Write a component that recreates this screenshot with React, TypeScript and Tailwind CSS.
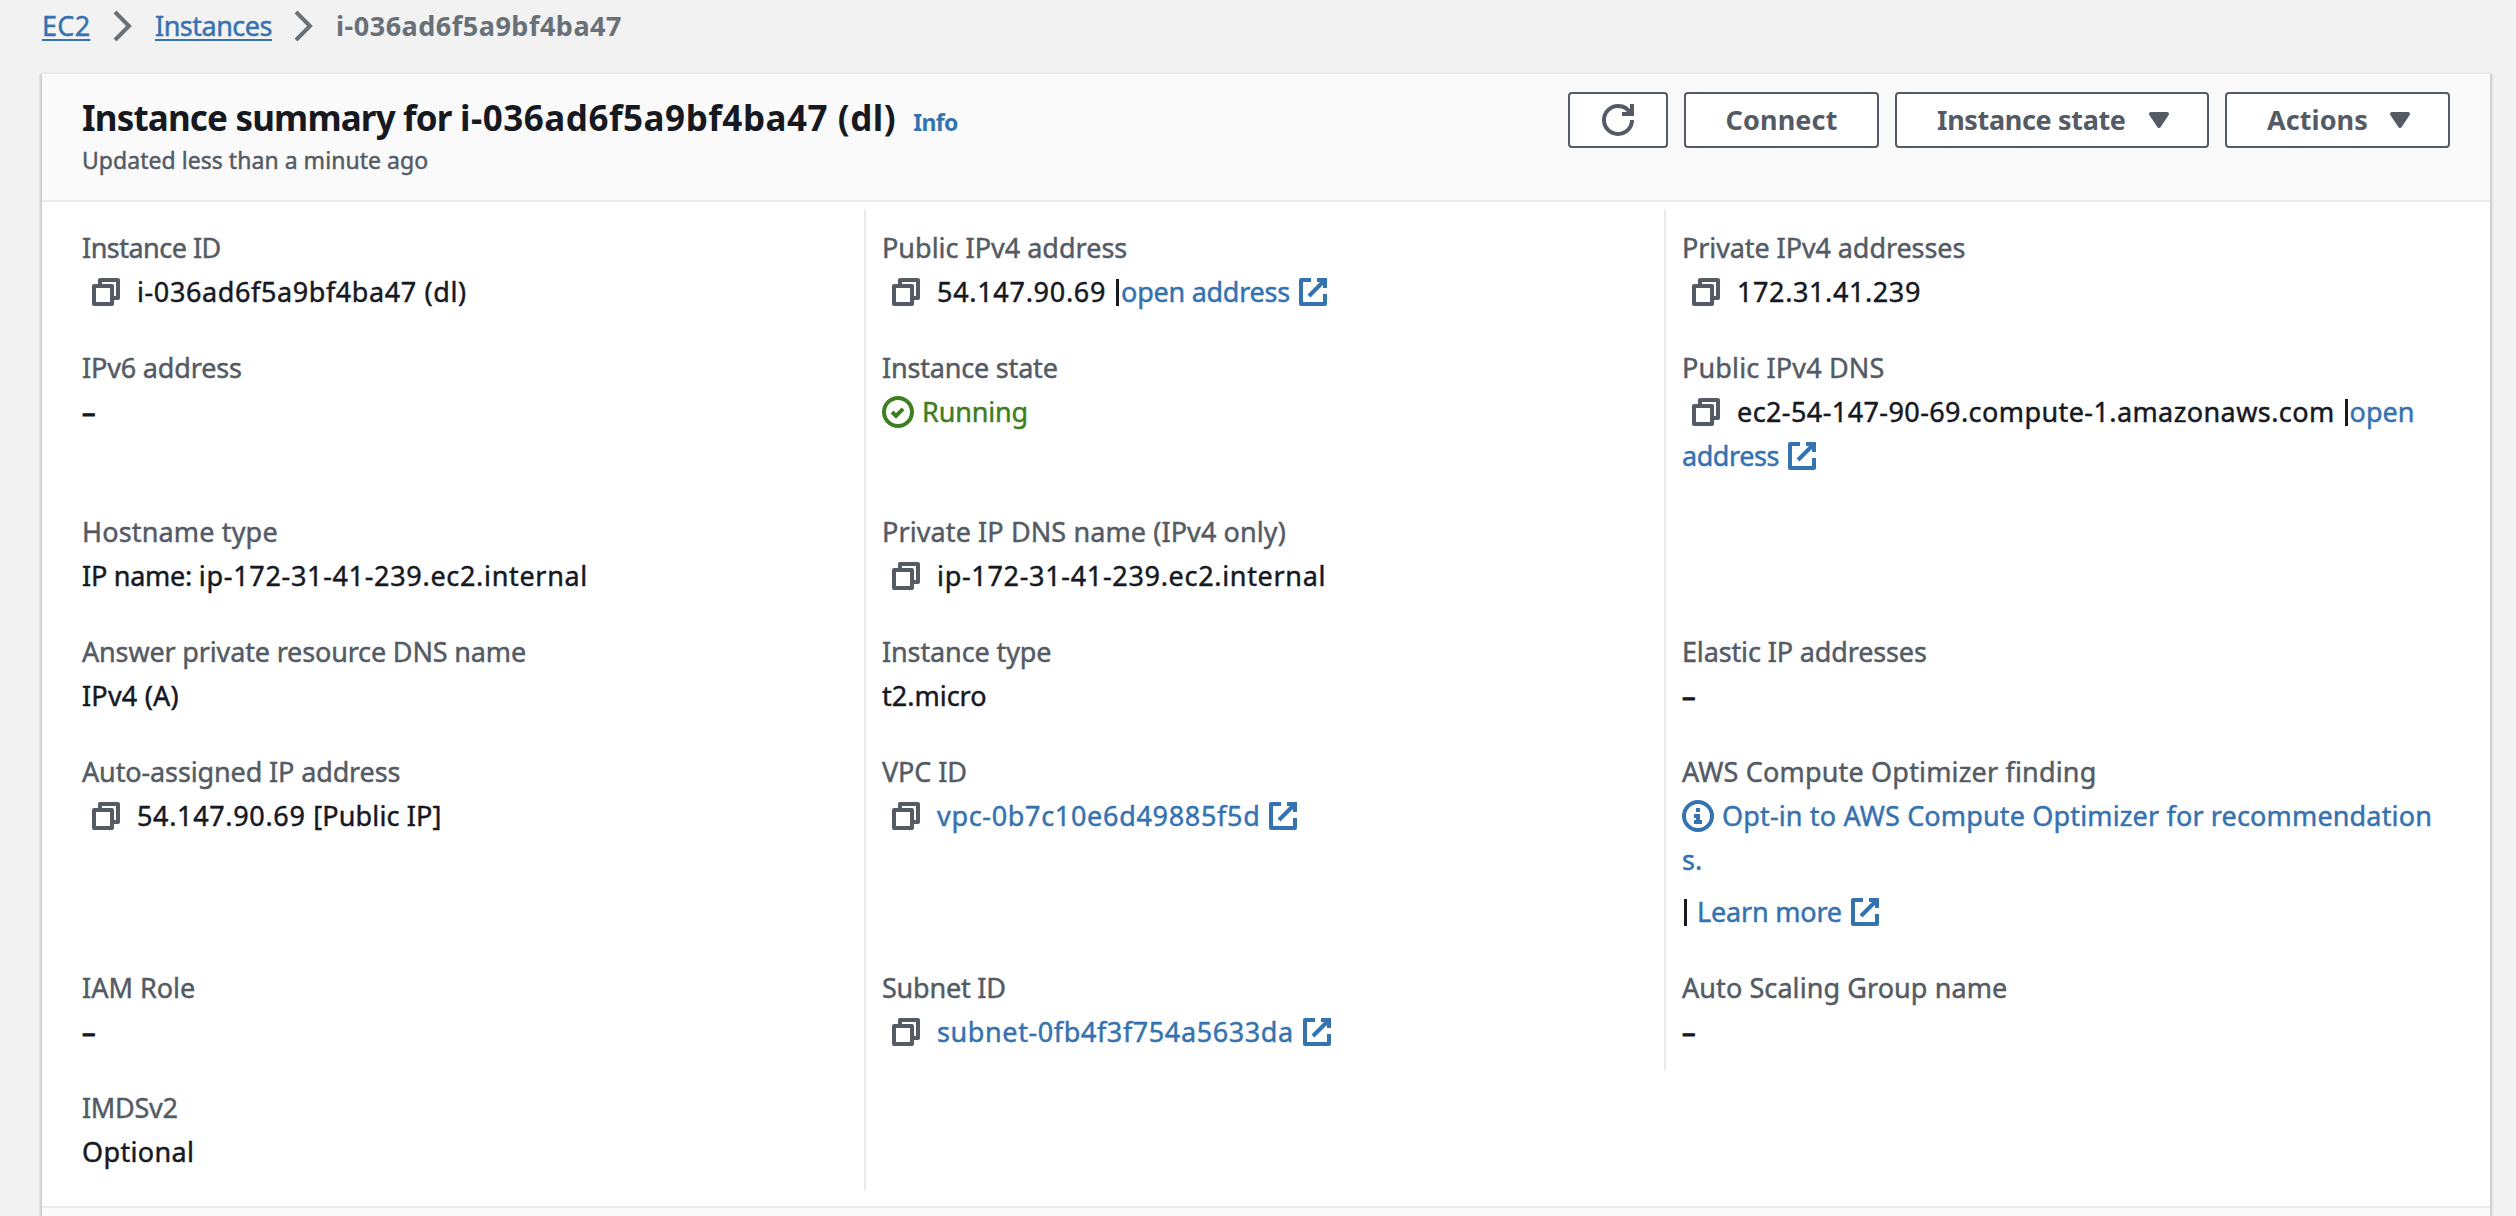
import type { ReactNode } from "react";

const iconBase = {
  viewBox: "0 0 16 16",
  fill: "none",
  stroke: "currentColor",
  strokeWidth: 2,
} as const;

function CopyIcon() {
  return (
    <svg {...iconBase} strokeLinejoin="round" className="mr-[15px] ml-2 size-8 shrink-0 text-[#545b64]">
      <path d="M2 5h9v9H2z" />
      <path d="M5 5V2h9v9h-3" />
    </svg>
  );
}

function ExternalIcon({ className }: { className: string }) {
  return (
    <svg {...iconBase} className={`size-8 shrink-0 ${className}`}>
      <path d="M10 2h4v4" />
      <path d="m6 10 8-8" />
      <path strokeLinejoin="round" d="M14 9.048V14H2V2h5" />
    </svg>
  );
}

function CheckCircle() {
  return (
    <svg {...iconBase} className="mr-2 size-8 shrink-0">
      <circle cx="8" cy="8" r="7" />
      <path d="m5 8 2 2 3.521-3.521" />
    </svg>
  );
}

function InfoCircle() {
  return (
    <svg {...iconBase} className="mr-2 size-8 shrink-0">
      <circle cx="8" cy="8" r="7" />
      <path d="M8 11V8H6" />
      <path d="M10 11H6" />
      <path d="M8 6V4" />
    </svg>
  );
}

function RefreshIcon() {
  return (
    <svg {...iconBase} className="size-8">
      <path d="M10 5h5V0" />
      <path d="M15 8a6.957 6.957 0 0 1-7 7 6.957 6.957 0 0 1-7-7 6.957 6.957 0 0 1 7-7 6.87 6.87 0 0 1 6.3 4" />
    </svg>
  );
}

function Chevron() {
  return (
    <svg {...iconBase} className="size-8 text-[#687078]">
      <path d="m4 1 7 7-7 7" />
    </svg>
  );
}

function Caret() {
  return (
    <svg {...iconBase} fill="currentColor" strokeLinejoin="round" className="size-8">
      <path d="M4 5h8l-4 6-4-6z" />
    </svg>
  );
}

function Button({ className, children }: { className: string; children: ReactNode }) {
  return (
    <button
      className={`flex h-14 items-center rounded-sm border-2 border-[#545b64] bg-white leading-none font-bold text-[#545b64] ${className}`}
    >
      {children}
    </button>
  );
}

function Field({
  label,
  labelClass = "",
  rowClass = "h-[120px]",
  children,
}: {
  label: string;
  labelClass?: string;
  rowClass?: string;
  children: ReactNode;
}) {
  return (
    <div className={`shrink-0 whitespace-nowrap ${rowClass}`}>
      <dt className={`text-[#545b64] ${labelClass}`}>{label}</dt>
      <dd>{children}</dd>
    </div>
  );
}

function Line({ className = "", children }: { className?: string; children: ReactNode }) {
  return <div className={`flex h-11 items-center ${className}`}>{children}</div>;
}

const Bar = ({ className }: { className: string }) => <span className={`h-[27px] w-[3px] bg-[#16191f] ${className}`} />;

const Empty = () => <Line className="[-webkit-text-stroke:1px]">–</Line>;

export default function App() {
  return (
    <div className="flex h-[1216px] w-[2516px] flex-col overflow-hidden bg-[#f2f2f2] pr-[26px] pl-[42px] text-[27px] leading-11 text-[#16191f] [-webkit-text-stroke:0.45px] [font-family:'Noto_Sans',sans-serif]">
      <nav className="flex h-[72px] shrink-0 items-start gap-4 pt-1 text-[#3572b0]">
        <a className="w-[49px] tracking-[0.3px] underline decoration-2 underline-offset-3">EC2</a>
        <span className="pt-1.5"><Chevron /></span>
        <a className="w-[117px] tracking-[-0.5px] underline decoration-2 underline-offset-3">Instances</a>
        <span className="pt-1.5"><Chevron /></span>
        <span className="font-bold tracking-[0.51px] text-[#687078] [-webkit-text-stroke:0]">i-036ad6f5a9bf4ba47</span>
      </nav>

      <main className="flex flex-1 flex-col border-t-2 border-[#eaeaea] bg-white shadow-[2px_2px_2px_0_rgba(0,28,36,0.18),-2px_2px_2px_0_rgba(0,28,36,0.18)]">
        <header className="flex h-32 shrink-0 items-start justify-between border-b-2 border-[#eaeaea] bg-[#fafafa] pr-10 pl-10">
          <div className="pt-5">
            <div className="flex items-baseline">
              <h1 className="text-[35px] leading-12 font-bold tracking-[0.53px] [-webkit-text-stroke:0]">
                <span className="tracking-[-0.83px]">Instance summary for </span>i-036ad6f5a9bf4ba47 (dl)
              </h1>
              <a className="ml-[17px] text-[23px] font-bold tracking-[-0.7px] text-[#3572b0] [-webkit-text-stroke:0]">Info</a>
            </div>
            <p className="-mt-0.5 text-[23px] leading-9 tracking-[0.04px] text-[#545b64]">Updated less than a minute ago</p>
          </div>
          <div className="flex gap-4 pt-[18px] [-webkit-text-stroke:0]">
            <Button className="w-[100px] justify-center"><RefreshIcon /></Button>
            <Button className="w-[195px] justify-center tracking-[0.14px]"><span className="pb-0.5">Connect</span></Button>
            <Button className="w-[314px] justify-between pr-8 pl-10 tracking-[-0.34px]"><span className="pb-0.5">Instance state</span><Caret /></Button>
            <Button className="w-[225px] justify-between pr-8 pl-10 tracking-[0.06px]"><span className="pb-0.5">Actions</span><Caret /></Button>
          </div>
        </header>

        <div className="flex h-[1006px] shrink-0 items-start border-b-2 border-[#eaeaea] pt-2 pl-10">
          <dl className="w-[782px] pt-4">
            <Field label="Instance ID" labelClass="tracking-[-0.52px]">
              <Line className="tracking-[0.6px]"><CopyIcon />i-036ad6f5a9bf4ba47 (dl)</Line>
            </Field>
            <Field label="IPv6 address" labelClass="tracking-[-0.16px]" rowClass="h-[164px]"><Empty /></Field>
            <Field label="Hostname type" labelClass="tracking-[0.16px]">
              <Line className="tracking-[0.68px]">
                <span className="whitespace-pre tracking-[-0.25px]">IP name: </span>ip-172-31-41-239.ec2.internal
              </Line>
            </Field>
            <Field label="Answer private resource DNS name" labelClass="tracking-[-0.16px]">
              <Line className="tracking-[0.21px]">IPv4 (A)</Line>
            </Field>
            <Field label="Auto-assigned IP address" labelClass="tracking-[-0.13px]" rowClass="h-[216px]">
              <Line className="tracking-[0.15px]">
                <CopyIcon /><span className="whitespace-pre tracking-[0.65px]">54.147.90.69 </span>[Public IP]
              </Line>
            </Field>
            <Field label="IAM Role"><Empty /></Field>
            <Field label="IMDSv2" labelClass="tracking-[-0.3px]">
              <Line className="tracking-[0.35px]">Optional</Line>
            </Field>
          </dl>

          <dl className="h-[980px] w-[800px] border-l-2 border-[#eaeaea] pt-4 pl-4">
            <Field label="Public IPv4 address">
              <Line>
                <CopyIcon />
                <span className="tracking-[0.7px]">54.147.90.69</span>
                <Bar className="ml-[10px]" />
                <a className="ml-0.5 tracking-[-0.27px] text-[#3572b0]">open address</a>
                <ExternalIcon className="ml-[7px] text-[#3572b0]" />
              </Line>
            </Field>
            <Field label="Instance state" labelClass="tracking-[-0.19px]" rowClass="h-[164px]">
              <Line className="tracking-[-0.15px] text-[#3f7f22]"><CheckCircle />Running</Line>
            </Field>
            <Field label="Private IP DNS name (IPv4 only)" labelClass="tracking-[0.1px]">
              <Line className="tracking-[0.68px]"><CopyIcon />ip-172-31-41-239.ec2.internal</Line>
            </Field>
            <Field label="Instance type" labelClass="tracking-[-0.11px]">
              <Line>t2.micro</Line>
            </Field>
            <Field label="VPC ID" labelClass="tracking-[-0.1px]" rowClass="h-[216px]">
              <Line className="tracking-[0.68px] text-[#3572b0]"><CopyIcon />vpc-0b7c10e6d49885f5d<ExternalIcon className="ml-[7px]" /></Line>
            </Field>
            <Field label="Subnet ID" labelClass="tracking-[-0.21px]">
              <Line className="tracking-[0.6px] text-[#3572b0]"><CopyIcon />subnet-0fb4f3f754a5633da<ExternalIcon className="ml-[7px]" /></Line>
            </Field>
          </dl>

          <dl className="h-[860px] flex-1 border-l-2 border-[#eaeaea] pt-4 pl-4">
            <Field label="Private IPv4 addresses" labelClass="tracking-[-0.09px]">
              <Line className="tracking-[0.6px]"><CopyIcon />172.31.41.239</Line>
            </Field>
            <Field label="Public IPv4 DNS" labelClass="tracking-[0.14px]" rowClass="h-[284px]">
              <Line>
                <CopyIcon />
                <span className="tracking-[0.41px]">ec2-54-147-90-69.compute-1.amazonaws.com</span>
                <Bar className="ml-[10px]" />
                <a className="ml-0.5 text-[#3572b0]">open</a>
              </Line>
              <Line className="tracking-[-0.45px] text-[#3572b0]">address<ExternalIcon className="ml-[7px]" /></Line>
            </Field>
            <Field label="Elastic IP addresses" labelClass="tracking-[-0.14px]"><Empty /></Field>
            <Field label="AWS Compute Optimizer finding" labelClass="tracking-[0.17px]" rowClass="h-[216px]">
              <Line className="tracking-[0.15px] text-[#3572b0]"><InfoCircle />Opt-in to AWS Compute Optimizer for recommendation</Line>
              <Line className="text-[#3572b0]">s.</Line>
              <Line className="mt-2 tracking-[-0.19px] text-[#3572b0]"><Bar className="mr-2.5 ml-0.5" />Learn more<ExternalIcon className="ml-[7px]" /></Line>
            </Field>
            <Field label="Auto Scaling Group name" labelClass="tracking-[0.08px]"><Empty /></Field>
          </dl>
        </div>
        <div className="flex-1 bg-[#fafafa]" />
      </main>
    </div>
  );
}
